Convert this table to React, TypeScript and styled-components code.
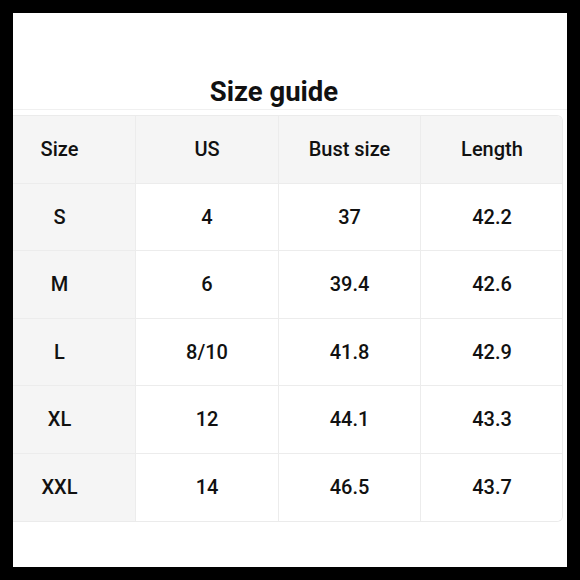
import styled, {createGlobalStyle} from "styled-components";

const GlobalStyle = createGlobalStyle`
  html, body {
    margin: 0;
    padding: 0;
    background: #000;
  }
  body {
    font-family: Roboto, "Liberation Sans", Arial, sans-serif;
    color: #111;
  }
`

const Frame = styled.div`
  width: 580px;
  height: 580px;
  padding: 13px;
  box-sizing: border-box;
  background: #000;
`

const Sheet = styled.div`
  width: 554px;
  height: 554px;
  background: #fff;
  display: flex;
  flex-direction: column;
`

const Title = styled.h1`
  margin: 0;
  padding: 64px 32px 2px 0;
  font-size: 27.5px;
  line-height: 30px;
  font-weight: 700;
  text-align: center;
  color: #111;
  border-bottom: 1px solid #f0f0f0;
`

const Table = styled.div`
  margin-top: 5px;
  width: 550px;
  display: grid;
  grid-template-columns: 123px 143px 142px 142px;
  grid-auto-rows: 67.5px;
  border: 1px solid #ebebeb;
  border-left: none;
  border-radius: 0 6px 6px 0;
  overflow: hidden;
  box-sizing: border-box;
`

const Cell = styled.div<{ $shade?: boolean; $first?: boolean; $lastCol?: boolean; $lastRow?: boolean }>`
  display: flex;
  align-items: center;
  justify-content: center;
  font-size: 20px;
  font-weight: 500;
  color: #111;
  background: ${p => p.$shade ? "#f5f5f5" : "#fff"};
  border-right: ${p => p.$lastCol ? "none" : "1px solid #ececec"};
  border-bottom: ${p => p.$lastRow ? "none" : "1px solid #ececec"};
  padding-right: ${p => p.$first ? "29px" : "0"};
`

const headers = ["Size", "US", "Bust size", "Length"]

const rows = [
    ["S", "4", "37", "42.2"],
    ["M", "6", "39.4", "42.6"],
    ["L", "8/10", "41.8", "42.9"],
    ["XL", "12", "44.1", "43.3"],
    ["XXL", "14", "46.5", "43.7"],
]

const App = () => {
    return <>
        <GlobalStyle/>
        <Frame>
            <Sheet>
                <Title>Size guide</Title>
                <Table>
                    {headers.map((h, i) =>
                        <Cell key={"h" + i} $shade $first={i === 0} $lastCol={i === 3}>{h}</Cell>)}
                    {rows.map((r, ri) => r.map((v, ci) =>
                        <Cell
                            key={ri + "-" + ci}
                            $shade={ci === 0}
                            $first={ci === 0}
                            $lastCol={ci === 3}
                            $lastRow={ri === rows.length - 1}
                        >{v}</Cell>))}
                </Table>
            </Sheet>
        </Frame>
    </>
}

export default App
